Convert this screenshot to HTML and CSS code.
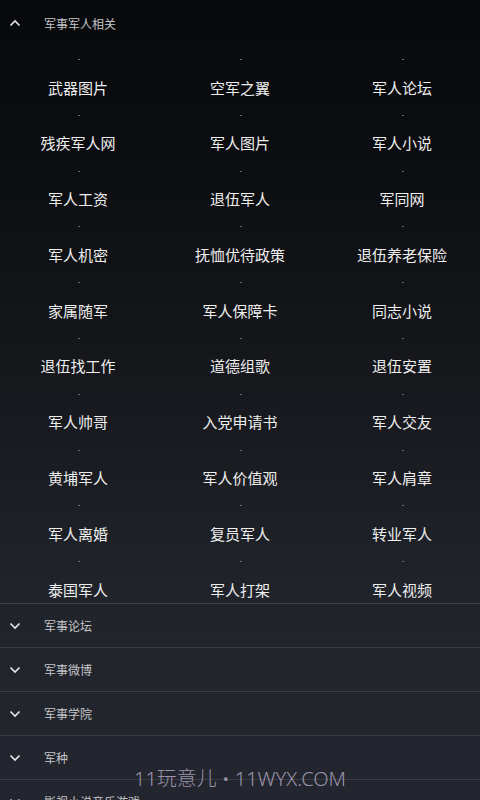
FILE: index.html
```html
<!DOCTYPE html>
<html>
<head>
	<meta charset="utf-8">
	<title>军事</title>
	<meta name="viewport" content="width=device-width, initial-scale=1.0">
	<link rel="stylesheet" href="styles.css">
</head>
<body>
	<div class="page">
		<div class="section open">
			<div class="head">
				<svg class="chev" width="12" height="8" viewBox="0 0 12 8"><polyline points="1.5,6.5 6,2 10.5,6.5"/></svg>
				<span>军事军人相关</span>
			</div>
			<div class="list">
				<div class="grid">
					<a class="item">武器图片</a>
					<a class="item">空军之翼</a>
					<a class="item">军人论坛</a>
					<a class="item">残疾军人网</a>
					<a class="item">军人图片</a>
					<a class="item">军人小说</a>
					<a class="item">军人工资</a>
					<a class="item">退伍军人</a>
					<a class="item">军同网</a>
					<a class="item">军人机密</a>
					<a class="item">抚恤优待政策</a>
					<a class="item">退伍养老保险</a>
					<a class="item">家属随军</a>
					<a class="item">军人保障卡</a>
					<a class="item">同志小说</a>
					<a class="item">退伍找工作</a>
					<a class="item">道德组歌</a>
					<a class="item">退伍安置</a>
					<a class="item">军人帅哥</a>
					<a class="item">入党申请书</a>
					<a class="item">军人交友</a>
					<a class="item">黄埔军人</a>
					<a class="item">军人价值观</a>
					<a class="item">军人肩章</a>
					<a class="item">军人离婚</a>
					<a class="item">复员军人</a>
					<a class="item">转业军人</a>
					<a class="item">泰国军人</a>
					<a class="item">军人打架</a>
					<a class="item">军人视频</a>
				</div>
			</div>
		</div>
		<div class="section">
			<div class="head">
				<svg class="chev" width="12" height="8" viewBox="0 0 12 8"><polyline points="1.5,1.5 6,6 10.5,1.5"/></svg>
				<span>军事论坛</span>
			</div>
		</div>
		<div class="section">
			<div class="head">
				<svg class="chev" width="12" height="8" viewBox="0 0 12 8"><polyline points="1.5,1.5 6,6 10.5,1.5"/></svg>
				<span>军事微博</span>
			</div>
		</div>
		<div class="section">
			<div class="head">
				<svg class="chev" width="12" height="8" viewBox="0 0 12 8"><polyline points="1.5,1.5 6,6 10.5,1.5"/></svg>
				<span>军事学院</span>
			</div>
		</div>
		<div class="section">
			<div class="head">
				<svg class="chev" width="12" height="8" viewBox="0 0 12 8"><polyline points="1.5,1.5 6,6 10.5,1.5"/></svg>
				<span>军种</span>
			</div>
		</div>
		<div class="section">
			<div class="head">
				<svg class="chev" width="12" height="8" viewBox="0 0 12 8"><polyline points="1.5,1.5 6,6 10.5,1.5"/></svg>
				<span>影视小说音乐游戏</span>
			</div>
		</div>
		<div class="watermark">11玩意儿 • 11WYX.COM</div>
	</div>
</body>
</html>
```
FILE: styles.css
```css
html, body {
	margin: 0;
	padding: 0;
	background: #23262e;
	font-family: "Noto Sans CJK SC", "Noto Sans", sans-serif;
}

.page {
	position: relative;
	height: 800px;
	overflow: hidden;
	background: linear-gradient(to bottom, #08090b 0px, #0c0d10 150px, #181a1f 420px, #21242b 604px, #23262e 800px);
}

.section {
	border-bottom: 1px solid #3a3d45;
}

.open {
	border-bottom: 1px solid #2b2d33;
}

.head {
	display: flex;
	align-items: center;
	height: 43px;
	color: #c4c5c8;
	font-size: 12px;
}

.open .head {
	height: 46px;
}

.chev {
	margin: 0 23px 0 9px;
	fill: none;
	stroke: #e6e6e6;
	stroke-width: 1.6;
}

.list {
	height: 557px;
	overflow: hidden;
	border-bottom: 1px solid #3a3d45;
	margin-bottom: -1px;
}

.grid {
	display: grid;
	grid-template-columns: repeat(3, 162px);
	grid-auto-rows: 55.8px;
	justify-content: center;
}

.item {
	position: relative;
	display: flex;
	align-items: center;
	justify-content: center;
	padding-top: 27px;
	height: 28px;
	color: #eeeeee;
	font-size: 15px;
}

.item::before {
	content: "";
	position: absolute;
	top: 13px;
	left: 50%;
	width: 2px;
	height: 1px;
	background: #6b6d72;
}

.watermark {
	position: absolute;
	left: 0;
	right: 0;
	top: 763px;
	text-align: center;
	color: rgba(196, 184, 214, 0.75);
	font-family: "Noto Sans", "Noto Sans CJK SC", sans-serif;
	font-weight: 300;
	font-size: 20px;
}
```
